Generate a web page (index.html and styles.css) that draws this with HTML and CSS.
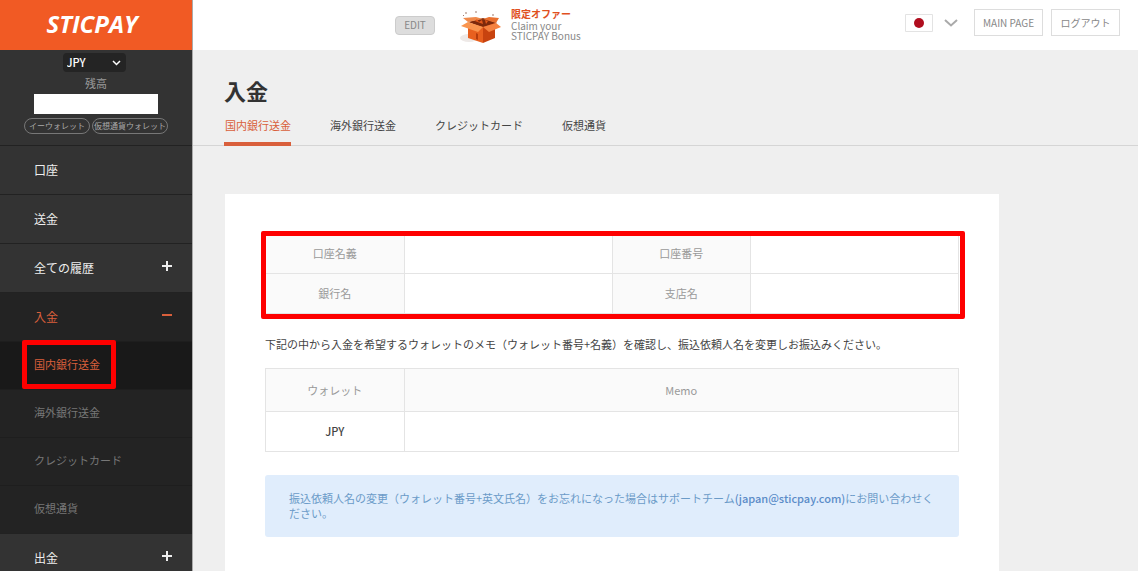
FILE: index.html
```html
<!DOCTYPE html>
<html lang="ja">
<head>
  <meta charset="UTF-8" />
  <meta name="viewport" content="width=device-width, initial-scale=1.0" />
  <title>STICPAY - 入金</title>
  <link rel="stylesheet" href="styles.css">
</head>
<body>
  <aside class="sidebar">
    <a class="logo" href="#">STICPAY</a>
    <div class="balance">
      <div class="currency">
        <select aria-label="通貨">
          <option>JPY</option>
          <option>USD</option>
        </select>
        <svg width="9" height="6" viewBox="0 0 9 6"><path d="M1 1l3.5 3.5L8 1" fill="none" stroke="#fff" stroke-width="1.5"/></svg>
      </div>
      <span class="balance-label">残高</span>
      <div class="balance-value"></div>
      <div class="wallets">
        <button class="pill" type="button">イーウォレット</button>
        <button class="pill" type="button">仮想通貨ウォレット</button>
      </div>
    </div>
    <nav>
      <ul class="menu">
        <li><a href="#">口座</a></li>
        <li><a href="#">送金</a></li>
        <li><a href="#">全ての履歴 <span class="plus"></span></a></li>
        <li class="open">
          <a href="#">入金 <span class="minus"></span></a>
          <ul class="submenu">
            <li class="active"><a href="#">国内銀行送金</a></li>
            <li><a href="#">海外銀行送金</a></li>
            <li><a href="#">クレジットカード</a></li>
            <li><a href="#">仮想通貨</a></li>
          </ul>
        </li>
        <li><a href="#">出金 <span class="plus"></span></a></li>
      </ul>
    </nav>
  </aside>

  <div class="page">
    <header class="topbar">
      <button class="edit" type="button">EDIT</button>
      <a class="promo" href="#">
        <svg width="42" height="34" viewBox="0 0 42 34">
          <ellipse cx="9" cy="27" rx="9" ry="4" fill="#eee9e7"/>
          <path d="M8 11L23 7l14 5-13 5z" fill="#7d2a0c"/>
          <path d="M8 12v15l15 5V16z" fill="#e8601f"/>
          <path d="M23 16v16l12-5V12z" fill="#c8430f"/>
          <path d="M8 11L3 7l13-1 7 2z" fill="#f08a4b"/>
          <path d="M23 8l6-2 10 1-3 5z" fill="#e9702f"/>
          <path d="M8 11l15 5-5 5L1 15z" fill="#f9954f"/>
          <path d="M23 16l13-4 5 4-12 5z" fill="#f58240"/>
          <path d="M15 10l2-2 2 3 3-2 1 4zM25 9l3 1-2 3z" fill="#e2591b"/>
          <path d="M16 22l2 1v6l-2-1z" fill="#b53c0d"/>
          <path d="M6 1l1 1-1 1-1-1zM16 0l1 1-1 1-1-1zM33 3l1 1-1 1-1-1zM3 4h1v1H3z" fill="#a07a6b"/>
        </svg>
        <span class="promo-text"><strong>限定オファー</strong>Claim your<br>STICPAY Bonus</span>
      </a>
      <div class="actions">
        <button class="lang" type="button" aria-label="日本語">
          <svg class="flag" width="28" height="18" viewBox="0 0 28 18"><path d="M.5.5h27v17H.5z" fill="#fff" stroke="#e3e3e3"/><circle cx="14" cy="9" r="5" fill="#b00d1e"/></svg>
          <svg width="14" height="8" viewBox="0 0 14 8"><path d="M1 1l6 5.500L13 1" fill="none" stroke="#aaa" stroke-width="2"/></svg>
        </button>
        <button class="box-button" type="button">MAIN PAGE</button>
        <button class="box-button" type="button">ログアウト</button>
      </div>
    </header>

    <main>
      <h1>入金</h1>
      <nav class="tabs">
        <a class="tab active" href="#">国内銀行送金</a>
        <a class="tab" href="#">海外銀行送金</a>
        <a class="tab" href="#">クレジットカード</a>
        <a class="tab" href="#">仮想通貨</a>
      </nav>

      <section class="card">
        <div class="marked">
          <table class="account">
            <tr><th>口座名義</th><td></td><th>口座番号</th><td></td></tr>
            <tr><th>銀行名</th><td></td><th>支店名</th><td></td></tr>
          </table>
        </div>
        <p class="guide">下記の中から入金を希望するウォレットのメモ（ウォレット番号+名義）を確認し、振込依頼人名を変更しお振込みください。</p>
        <table class="memo">
          <thead>
            <tr><th>ウォレット</th><th>Memo</th></tr>
          </thead>
          <tbody>
            <tr><td>JPY</td><td></td></tr>
          </tbody>
        </table>
        <p class="notice">振込依頼人名の変更（ウォレット番号+英文氏名）をお忘れになった場合はサポートチーム<a href="mailto:japan@sticpay.com">(japan@sticpay.com)</a>にお問い合わせください。</p>
      </section>
    </main>
  </div>
</body>
</html>
```
FILE: styles.css
```css
:root {
  --orange: #f15a24;
  --accent: #d95f3b;
  --side-bg: #333;
  --side-open: #232323;
  --page-bg: #efefef;
  --line: #e4e4e4;
  --mark: #fe0000;
}
* { box-sizing: border-box; margin: 0; padding: 0; }
body {
  display: flex;
  height: 100vh;
  overflow: hidden;
  font-family: "Noto Sans CJK JP", sans-serif;
  font-size: 11px;
  line-height: 15px;
  color: #444;
  background: var(--page-bg);
}
a { color: inherit; text-decoration: none; }
ul { list-style: none; }
button, select { font: inherit; color: inherit; background: none; border: 0; cursor: pointer; }
svg { display: block; }

/* sidebar */
.sidebar { width: 193px; flex: none; overflow: hidden; background: var(--side-bg); color: #eee; border-right: 1px solid #aaa; }
.logo {
  display: flex; align-items: center; justify-content: center;
  height: 50px; padding: 0 8px 4px 0;
  background: var(--orange); color: #fff;
  font: italic bold 24px "Open Sans", sans-serif;
}
.balance { display: flex; flex-direction: column; align-items: center; height: 95px; padding-top: 3px; }
.currency { position: relative; width: 63px; margin-right: 4px; }
.currency select { appearance: none; width: 100%; height: 19px; padding: 0 4px; border-radius: 4px; background: #242424; color: #fff; font-weight: 500; }
.currency svg { position: absolute; right: 5px; top: 7px; pointer-events: none; }
.balance-label { margin: 4px 0 3px; color: #999; }
.balance-value { width: 124px; height: 20px; background: #fff; }
.wallets { display: flex; gap: 2px; margin-top: 4px; }
.pill { height: 16px; padding: 0 4px; border: 1px solid #777; border-radius: 8px; color: #aaa; font-size: 8px; line-height: 14px; white-space: nowrap; }
.pill:last-child { padding: 0 1px; }
.menu a { display: flex; align-items: center; justify-content: space-between; height: 49px; padding: 0 20px 2px 34px; border-top: 1px solid #222; font-size: 12px; }
.menu .open { background: var(--side-open); color: var(--accent); }
.menu .submenu a { height: 48px; border-top-color: #1e1e1e; color: #777; font-size: 11px; }
.submenu .active { position: relative; background: #191919; }
.menu .submenu .active a { color: var(--accent); }
.submenu .active::after { content: ""; position: absolute; inset: -1px 76px 0 22px; border: 5px solid var(--mark); border-radius: 2px; }
.plus, .minus { width: 10px; height: 10px; margin-bottom: 2px; background: linear-gradient(currentColor, currentColor) center / 100% 2px no-repeat; }
.plus { background: linear-gradient(#eee, #eee) center / 100% 2px no-repeat, linear-gradient(#eee, #eee) center / 2px 100% no-repeat; }

/* top bar */
.page { flex: 1; min-width: 0; }
.topbar { display: flex; align-items: center; height: 50px; padding: 0 18px 0 202px; background: #fff; color: #888; }
.edit { width: 40px; height: 19px; border: 1px solid #ccc; border-radius: 4px; background: #ddd; font-size: 10px; line-height: 16px; }
.promo { display: flex; align-items: center; gap: 9px; margin-left: 25px; padding-top: 6px; }
.promo-text { margin-bottom: 8px; font-size: 10px; line-height: 10px; }
.promo-text strong { display: block; margin-bottom: 2px; color: #e0501f; line-height: 11px; }
.actions { display: flex; align-items: center; gap: 8px; margin-left: auto; padding-bottom: 5px; }
.lang { display: flex; align-items: center; gap: 11px; margin-right: 8px; }
.box-button { width: 69px; height: 27px; border: 1px solid #ddd; font-size: 10px; }

/* content */
h1 { padding: 23px 32px 0 31px; font-size: 22px; line-height: 34px; color: #333; }
.tabs { display: flex; gap: 38px; height: 39px; padding: 0 31px; border-bottom: 1px solid #d5d5d5; }
.tab { height: 39px; padding: 11px 0 0 1px; }
.tab.active { color: var(--accent); border-bottom: 4px solid var(--accent); }
.card { max-width: 774px; min-height: 400px; margin: 48px 32px 0; padding: 39px 40px 40px; background: #fff; }
table { width: 100%; border-collapse: collapse; table-layout: fixed; }
th, td { height: 40px; border: 1px solid var(--line); text-align: center; }
th { background: #fafafa; color: #999; font-weight: normal; }
.account th { width: 20%; }
.marked { position: relative; }
.marked::after { content: ""; position: absolute; inset: -2px -6px -5px -4px; border: 5px solid var(--mark); border-radius: 2px; }
.guide { margin: 23px 0 16px; }
.memo th { height: 43px; }
.memo th:first-child { width: 20%; }
.memo td { font-weight: 500; }
.notice { margin-top: 23px; padding: 16px 24px; border-radius: 3px; background: #e0edfc; color: #6b9bc8; }
.notice a { color: #5b8cc8; font-weight: 500; }
```
